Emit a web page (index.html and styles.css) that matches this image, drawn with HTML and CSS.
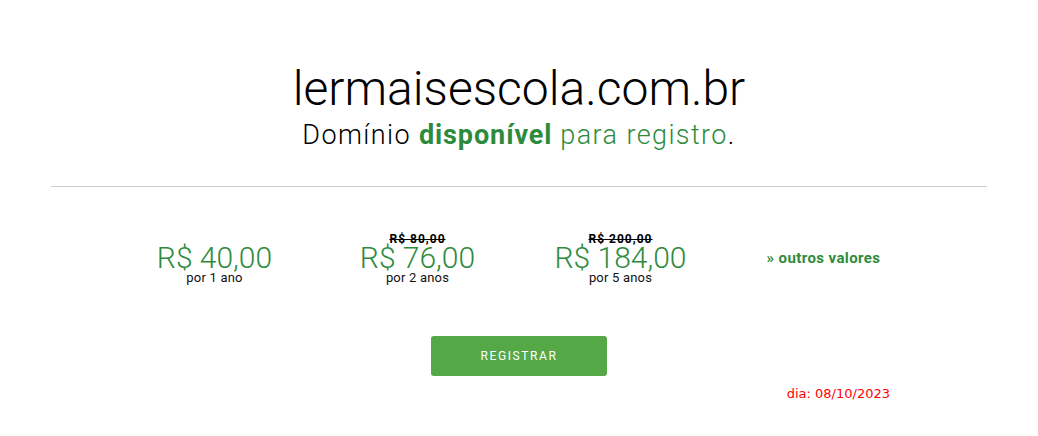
FILE: index.html
```html
<!DOCTYPE html>
<html lang="pt-BR">
<head>
<meta charset="utf-8">
<title>lermaisescola.com.br</title>
<link rel="stylesheet" href="styles.css">
</head>
<body>
<div class="container">
  <header class="head">
    <h1 class="domain">lermaisescola.com.br</h1>
    <p class="status">Domínio <strong>disponível</strong> <span class="green">para registro</span>.</p>
  </header>
  <hr class="sep">
  <div class="prices">
    <div class="price">
      <div class="value">R$ 40,00</div>
      <div class="period">por 1 ano</div>
    </div>
    <div class="price">
      <div class="old">R$ 80,00</div>
      <div class="value">R$ 76,00</div>
      <div class="period">por 2 anos</div>
    </div>
    <div class="price">
      <div class="old">R$ 200,00</div>
      <div class="value">R$ 184,00</div>
      <div class="period">por 5 anos</div>
    </div>
    <div class="price">
      <a class="more" href="#">» outros valores</a>
    </div>
  </div>
  <div class="actions">
    <a class="btn" href="#">REGISTRAR</a>
  </div>
  <div class="date-row">
    <span class="date">dia: 08/10/2023</span>
  </div>
</div>
</body>
</html>
```
FILE: styles.css
```css
html, body {
  margin: 0;
  padding: 0;
  background: #fff;
}
body {
  font-family: Roboto, "Liberation Sans", sans-serif;
  color: #000;
}
.container {
  width: 936px;
  margin: 0 auto;
  padding-top: 61px;
}
.head {
  text-align: center;
}
.domain {
  margin: 0;
  font-weight: 300;
  font-size: 48px;
  line-height: 56px;
}
.status {
  margin: 2px 0 0;
  font-weight: 300;
  font-size: 27px;
  line-height: 32px;
  letter-spacing: 1.4px;
}
.status strong {
  font-weight: 700;
  color: #2e8b3d;
  letter-spacing: 0.9px;
}
.green {
  color: #2e8b3d;
}
.sep {
  border: 0;
  border-top: 1px solid #cccccc;
  margin: 35px 0 0;
  height: 0;
}
.prices {
  display: flex;
  justify-content: center;
  margin-top: 46px;
}
.price {
  width: 203px;
  height: 51px;
  display: flex;
  flex-direction: column;
  align-items: center;
  justify-content: flex-end;
}
.old {
  font-size: 12px;
  font-weight: 700;
  line-height: 12px;
  letter-spacing: 1px;
  text-decoration: line-through;
  color: #000;
}
.value {
  font-size: 30px;
  font-weight: 300;
  line-height: 26px;
  color: #2e8b3d;
}
.period {
  font-size: 13px;
  font-weight: 400;
  line-height: 13px;
  letter-spacing: 0.2px;
  color: #111;
}
.more {
  font-size: 15px;
  font-weight: 700;
  line-height: 18px;
  letter-spacing: 0.4px;
  color: #2e8b3d;
  text-decoration: none;
  margin-bottom: 17px;
}
.actions {
  display: flex;
  justify-content: center;
  margin-top: 52px;
}
.btn {
  display: block;
  width: 176px;
  height: 40px;
  line-height: 40px;
  text-align: center;
  background: #55a846;
  color: #fff;
  border-radius: 3px;
  font-size: 12px;
  letter-spacing: 1.6px;
  text-decoration: none;
}
.date-row {
  display: flex;
  justify-content: flex-end;
  padding-right: 97px;
  margin-top: 10px;
}
.date {
  font-family: "DejaVu Sans", Verdana, sans-serif;
  font-size: 13px;
  line-height: 15px;
  color: #ff0000;
}
```
